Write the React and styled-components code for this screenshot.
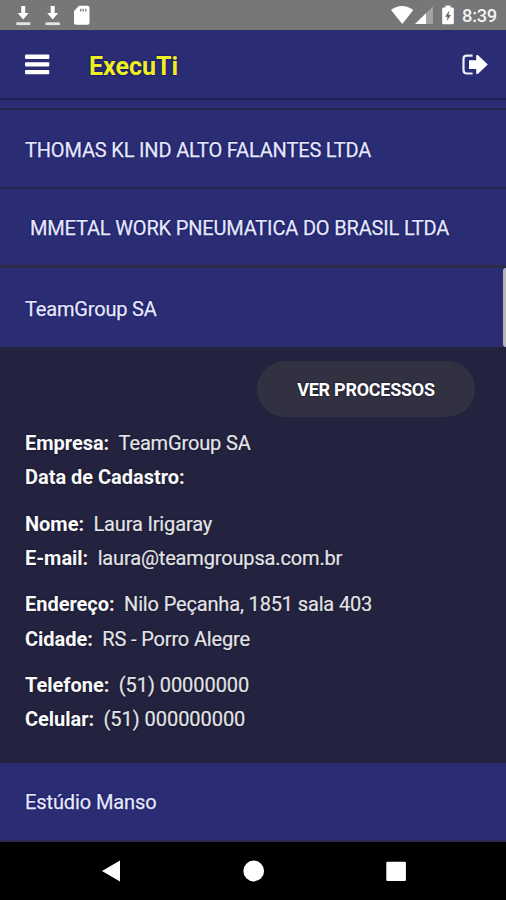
import React from "react";
import styled, { createGlobalStyle } from "styled-components";

const Global = createGlobalStyle`
  * { box-sizing: border-box; }
  html, body { margin: 0; padding: 0; background: #24233f; }
  body { font-family: Roboto, "Liberation Sans", sans-serif; overflow: hidden; }
`;

const Screen = styled.div`
  width: 506px;
  height: 900px;
  display: flex;
  flex-direction: column;
  overflow: hidden;
  background: #24233f;
  color: #f4f4fa;
`;

const StatusBar = styled.div`
  height: 30px;
  flex: none;
  display: flex;
  justify-content: space-between;
  background: #777777;
  color: #fff;
`;

const StatusRight = styled.div`
  display: flex;
  padding-right: 9px;
`;

const Clock = styled.span`
  width: 35px;
  font-size: 18.3px;
  font-weight: 500;
  line-height: 32px;
  letter-spacing: -0.25px;
  white-space: nowrap;
  color: #f4f4f4;
`;

const Header = styled.header`
  height: 70px;
  flex: none;
  display: flex;
  align-items: center;
  justify-content: space-between;
  background: #2a2c74;
  border-bottom: 2px solid #222355;
`;

const Brand = styled.div`
  display: flex;
  align-items: center;
`;

const MenuButton = styled.button`
  width: 89px;
  height: 68px;
  padding: 1px 0 0 25px;
  border: 0;
  background: none;
  display: flex;
  align-items: center;
`;

const ExitButton = styled(MenuButton)`
  width: 46px;
  padding: 2px 0 0;
`;

const Title = styled.h1`
  margin: 0;
  font-size: 25px;
  line-height: 30px;
  padding-top: 5px;
  font-weight: 700;
  letter-spacing: 0;
  color: #eeee22;
  text-shadow: 0 0 2px #07075a;
`;

const List = styled.main`
  flex: 1;
  display: flex;
  flex-direction: column;
`;

const PartialRow = styled.div`
  height: 10px;
  flex: none;
  background: #2a2c74;
  border-bottom: 2px solid #25264f;
`;

const Row = styled.div`
  height: ${(p) => p.$height}px;
  flex: none;
  display: flex;
  align-items: center;
  justify-content: space-between;
  padding-left: ${(p) => p.$indent || 25}px;
  background: #2a2c74;
  border-bottom: ${(p) => p.$line || 0}px solid ${(p) => p.$lineColor || "#25264f"};
`;

const RowLabel = styled.span`
  font-size: 20px;
  line-height: 24px;
  padding-top: ${(p) => p.$drop || 0}px;
  white-space: nowrap;
  letter-spacing: ${(p) => p.$tracking ?? -0.17}px;
  -webkit-text-stroke: 0.25px #e6e8fa;
  text-shadow: 0 0 2px #07075a;
  color: #e6e8fa;
`;

const ScrollThumb = styled.div`
  align-self: stretch;
  width: 3.5px;
  border-radius: 3px 0 0 3px;
  background: #b5b5b5;
`;

const Panel = styled.section`
  height: 416px;
  flex: none;
  display: flex;
  flex-direction: column;
  padding: 14px 31px 0 25px;
  background: #24233f;
`;

const ProcessButton = styled.button`
  align-self: flex-end;
  width: 218px;
  height: 56px;
  flex: none;
  border: 0;
  border-radius: 28px;
  background: #323142;
  color: #fff;
  font: 700 18px/56px Roboto, sans-serif;
  padding: 1px 0 0;
  letter-spacing: -0.26px;
  text-shadow: 0 0 2px #0a0a18;
`;

const Details = styled.div`
  display: flex;
  flex-direction: column;
  gap: 12.3px;
  padding-top: 9px;
`;

const Group = styled.dl`
  margin: 0;
`;

const Field = styled.div`
  display: flex;
  height: 34.2px;
  align-items: center;
  font-size: 20px;
  white-space: nowrap;
  text-shadow: 0 0 2px #0d0d22;
`;

const Term = styled.dt`
  font-weight: 700;
  letter-spacing: -0.02px;
  color: #fafafa;
`;

const Value = styled.dd`
  margin: 0 0 0 9.4px;
  letter-spacing: ${(p) => (p.$numeric ? -0.05 : -0.15)}px;
  -webkit-text-stroke: 0.2px #e4e4e8;
  color: #e4e4e8;
`;

const NavBar = styled.nav`
  height: 58px;
  flex: none;
  background: #000;
`;

const groups = [
  [["Empresa:", "TeamGroup SA"], ["Data de Cadastro:", ""]],
  [["Nome:", "Laura Irigaray"], ["E-mail:", "laura@teamgroupsa.com.br"]],
  [["Endereço:", "Nilo Peçanha, 1851 sala 403"], ["Cidade:", "RS - Porro Alegre"]],
  [["Telefone:", "(51) 00000000"], ["Celular:", "(51) 000000000"]],
];

function NoticeIcons() {
  return (
    <svg width="100" height="30" fill="#fff">
      <path d="M21.2 6h4v7h3.5l-5.5 6.5-5.5-6.5h3.5z" />
      <path d="M16.3 22.3h14v2.8h-14z" fill="#e4e4e4" />
      <path d="M50.7 6h4v7h3.5l-5.5 6.5-5.5-6.5h3.5z" />
      <path d="M45.5 22.3h14.3v2.8H45.5z" fill="#e4e4e4" />
      <path d="M79 5.7h8.5q2 0 2 2v15q0 2-2 2H76q-2 0-2-2V11z" />
      <path d="M80 8.7h1.5v2.7H80zM82.5 8.7H84v2.7h-1.5zM85 8.7h1.5v2.7H85z" fill="#8a8a8a" />
    </svg>
  );
}

function SignalIcons() {
  return (
    <svg width="72" height="30" viewBox="390 0 72 30" fill="#fff">
      <path d="M391 10q11-8 22.3 0L402.3 24z" />
      <path d="M433 6.5V24h-18z" fill="#a2a2a2" />
      <path d="M426 13.3V24h-11z" />
      <path d="M445.5 5.5h5v2h2q1.3 0 1.3 1.3V23q0 1.3-1.3 1.3h-9q-1.3 0-1.3-1.3V8.8q0-1.3 1.3-1.3h2z" />
      <path d="M449.4 10.5l-4.4 6.3h2.5l-.7 4.2 4.3-6.1h-2.5z" fill="#6a6a6a" />
    </svg>
  );
}

function MenuIcon() {
  return (
    <svg width="25" height="22" fill="#fff">
      <rect x="0" y="0.5" width="24.3" height="4.4" rx="1" />
      <rect x="0" y="8.2" width="24.3" height="4.4" rx="1" />
      <rect x="0" y="16" width="24.3" height="4.2" rx="1" />
    </svg>
  );
}

function ExitIcon() {
  return (
    <svg width="30" height="22" viewBox="0 0 30 22" fill="#fff">
      <path d="M12.6 1.7H6.8Q3.5 1.7 3.5 5v11q0 3.5 3.3 3.5h5.8" fill="none" stroke="#eef" strokeWidth="2.2" />
      <path d="M9 6.2h7.2V1.3l1.6-.3L27.8 10.4 17.8 20l-1.6-.3V15H9z" />
    </svg>
  );
}

function NavIcons() {
  return (
    <svg width="506" height="58" fill="#fff">
      <path d="M120 18.5v21L102 29z" />
      <circle cx="253.7" cy="29" r="10.4" />
      <rect x="386.3" y="19.7" width="19.6" height="19.3" rx="1" />
    </svg>
  );
}

export default function App() {
  return (
    <>
      <Global />
      <Screen>
        <StatusBar>
          <NoticeIcons />
          <StatusRight>
            <SignalIcons />
            <Clock>8:39</Clock>
          </StatusRight>
        </StatusBar>
        <Header>
          <Brand>
            <MenuButton aria-label="Menu"><MenuIcon /></MenuButton>
            <Title>ExecuTi</Title>
          </Brand>
          <ExitButton aria-label="Sair"><ExitIcon /></ExitButton>
        </Header>
        <List>
          <PartialRow />
          <Row $height={79} $line={2}><RowLabel $drop={3}>THOMAS KL IND ALTO FALANTES LTDA</RowLabel></Row>
          <Row $height={79} $indent={30} $line={3} $lineColor="#2f2e48">
            <RowLabel $drop={2}>MMETAL WORK PNEUMATICA DO BRASIL LTDA</RowLabel>
          </Row>
          <Row $height={79}>
            <RowLabel $drop={2}>TeamGroup SA</RowLabel>
            <ScrollThumb />
          </Row>
          <Panel>
            <ProcessButton>VER PROCESSOS</ProcessButton>
            <Details>
              {groups.map((fields) => (
                <Group key={fields[0][0]}>
                  {fields.map(([label, value]) => (
                    <Field key={label}>
                      <Term>{label}</Term>
                      <Value $numeric={value.startsWith("(")}>{value}</Value>
                    </Field>
                  ))}
                </Group>
              ))}
            </Details>
          </Panel>
          <Row $height={79} $line={2} $lineColor="#29294d"><RowLabel $tracking={-0.1}>Estúdio Manso</RowLabel></Row>
        </List>
        <NavBar><NavIcons /></NavBar>
      </Screen>
    </>
  );
}
